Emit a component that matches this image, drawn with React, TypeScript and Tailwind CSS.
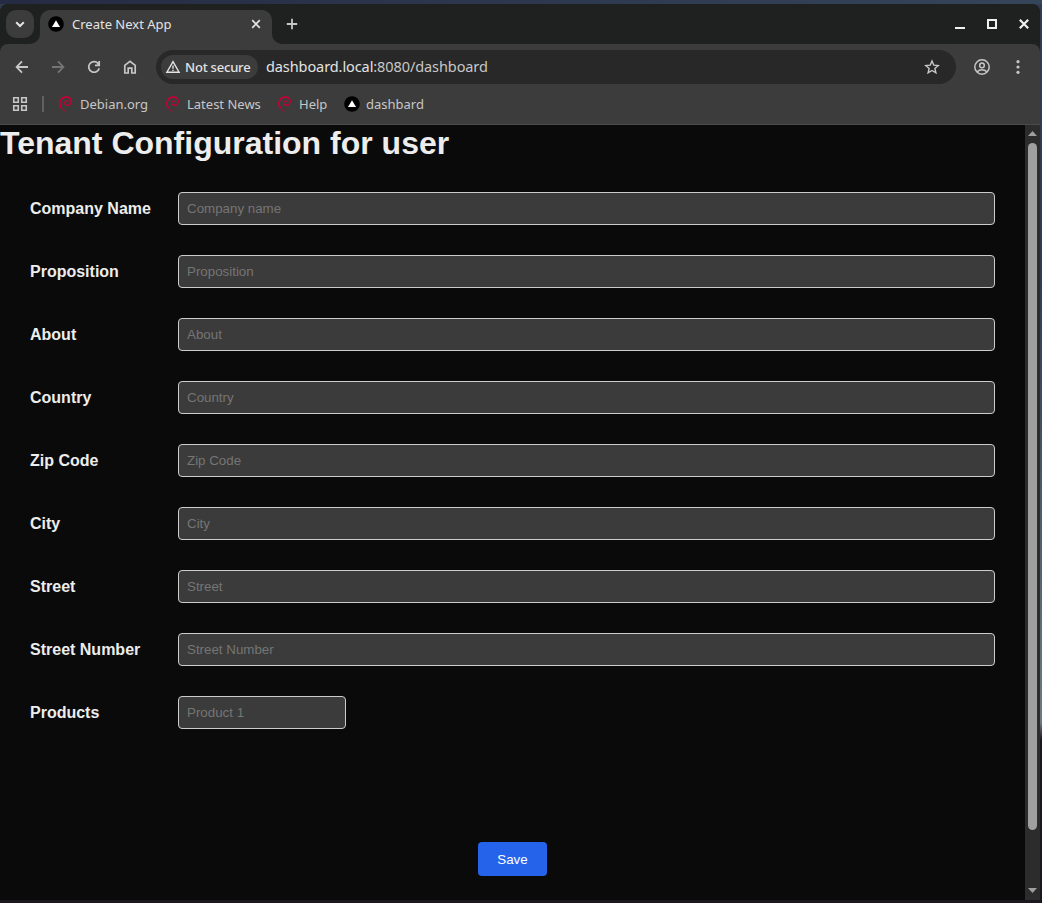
import type { ReactNode } from "react";

function Icon({ children, className = "" }: { children: ReactNode; className?: string }) {
  return (
    <svg
      viewBox="0 0 20 20"
      className={"block size-5 shrink-0 fill-none stroke-current " + className}
    >
      {children}
    </svg>
  );
}

function NextLogo() {
  return (
    <svg viewBox="0 0 16 16" className="block size-4 shrink-0">
      <circle cx="8" cy="8" r="7.8" fill="#000" />
      <path d="M8 4.2 12 11H4Z" fill="#fff" />
    </svg>
  );
}

function DebianSwirl() {
  return (
    <svg viewBox="0 0 16 16" className="block size-4 shrink-0 fill-none stroke-[#c70036]">
      <path
        d="M9.4 8.9C7.9 9.6 6.4 8.6 6.6 6.9 6.8 5 8.8 4.4 10.1 5.2"
        strokeWidth="1.1"
        strokeLinecap="round"
      />
      <path d="M9.2 9.3c2 .1 3.8-1.5 4-3.6C13.4 3 11.3.9 8.4 1" strokeWidth="1.5" />
      <path d="M11.5 1.7C8.6.3 4.7 1 3 3.6 1.3 6.2 1.8 9.6 3.4 12" strokeWidth="1.6" />
      <path d="M2.9 10.8c1 2.1 2.4 3.7 4.6 4.8" strokeWidth="1" />
    </svg>
  );
}

function TabStrip() {
  return (
    <div className="flex h-10 items-start rounded-tr-lg bg-[#1f2120]">
      <button className="mt-1.5 ml-1.5 flex size-7 items-center justify-center rounded-[10px] bg-[#3c3c3c] text-[#e3e3e3]">
        <Icon className="stroke-2">
          <path d="m6.2 8.2 3.8 3.8 3.8-3.8" />
        </Icon>
      </button>
      <svg viewBox="0 0 10 10" className="mt-[30px] -ml-1 block size-2.5 shrink-0">
        <path d="M10 0A10 10 0 0 1 0 10H10Z" fill="#3c3c3c" />
      </svg>
      <div className="mt-1.5 flex h-[34px] w-[232px] items-start rounded-t-[10px] bg-[#3c3c3c] pt-1.5 pl-2 text-[#e3e3e3]">
        <NextLogo />
        <span className="ml-2 w-[174px] text-[13px] leading-4 whitespace-nowrap">Create Next App</span>
        <Icon className="-mt-0.5 stroke-[1.7]">
          <path d="m6.2 6.2 7.6 7.6m0-7.6-7.6 7.6" />
        </Icon>
      </div>
      <svg viewBox="0 0 10 10" className="mt-[30px] block size-2.5 shrink-0">
        <path d="M0 0A10 10 0 0 0 10 10H0Z" fill="#3c3c3c" />
      </svg>
      <Icon className="mt-2.5 stroke-[1.8] text-[#c7c7c7]">
        <path d="M10 4.8v10.4M4.8 10h10.4" />
      </Icon>
      <div className="mt-2.5 mr-1.5 ml-auto flex gap-3 text-[#f0f0f0]">
        <Icon className="stroke-2">
          <path d="M5 14h10" />
        </Icon>
        <Icon className="stroke-2">
          <path d="M6 6h8v8H6z" />
        </Icon>
        <Icon className="stroke-[2.2]">
          <path d="m5.8 5.8 8.4 8.4m0-8.4-8.4 8.4" />
        </Icon>
      </div>
    </div>
  );
}

function Toolbar() {
  return (
    <div className="flex h-[46px] items-center bg-[#3c3c3c] pl-3 text-[#c7c7c7]">
      <div className="flex gap-4">
        <Icon className="stroke-[1.8]">
          <path d="M16 10H5M10 4.4 4.6 10l5.4 5.6" />
        </Icon>
        <Icon className="stroke-[1.8] text-[#757575]">
          <path d="M4 10h11M10 4.4l5.4 5.6-5.4 5.6" />
        </Icon>
        <Icon className="stroke-[1.7]">
          <path d="M15.2 11.2A5.3 5.3 0 1 1 14 6.4L15.2 8M15.2 4v4.3H11" />
        </Icon>
        <Icon className="stroke-[1.7]">
          <path d="M4.8 16V8.3L10 4.3l5.2 4V16h-3.4v-4.8H8.2V16Z" />
        </Icon>
      </div>
      <div className="ml-4 flex h-[34px] w-[800px] items-center rounded-full bg-[#282828] pr-3.5 pl-[5px]">
        <div className="flex h-6 w-[97px] items-center rounded-full bg-[#3c3c3c] pl-0.5 text-[#e3e3e3]">
          <Icon className="stroke-[1.4]">
            <path d="m10 4.7 6.1 10.5H3.9ZM10 8.5v3.3m0 .9v1.4" />
          </Icon>
          <span className="ml-0.5 pt-px text-[13px] font-medium tracking-[-0.2px] whitespace-nowrap">
            Not secure
          </span>
        </div>
        <span className="ml-2 flex-1 text-[14.5px] tracking-[-0.09px] text-[#c7c7c7]">
          <span className="text-[#e3e3e3]">dashboard.local</span>:8080/dashboard
        </span>
        <Icon className="stroke-[1.4]">
          <path d="m10 4 1.75 4.1 4.5.4-3.4 2.95 1.05 4.4L10 13.5l-3.9 2.35 1.05-4.4-3.4-2.95 4.5-.4Z" />
        </Icon>
      </div>
      <Icon className="ml-4 stroke-[1.5]">
        <circle cx="10" cy="10" r="7.2" />
        <circle cx="10" cy="8.4" r="2.3" />
        <path d="M5 15c1.4-1.5 3.1-2.2 5-2.2s3.6.7 5 2.2" />
      </Icon>
      <Icon className="ml-4">
        <g fill="currentColor" stroke="none">
          <circle cx="10" cy="4.7" r="1.6" />
          <circle cx="10" cy="10" r="1.6" />
          <circle cx="10" cy="15.3" r="1.6" />
        </g>
      </Icon>
    </div>
  );
}

function Bookmarks() {
  return (
    <div className="flex h-[35px] items-start border-b border-[#4a4a4a] bg-[#3c3c3c] pt-1.5 pl-3 text-[13px] leading-4 text-[#c7c7c7]">
      <svg viewBox="0 0 16 16" className="mr-3.5 block size-4 fill-none stroke-current stroke-[1.6]">
        <path d="M1.75 1.75h4.5v4.5h-4.5zM9.75 1.75h4.5v4.5h-4.5zM1.75 9.75h4.5v4.5h-4.5zM9.75 9.75h4.5v4.5h-4.5z" />
      </svg>
      <div className="mr-[14px] h-4 w-0.5 bg-[#606060]" />
      <div className="flex w-[107px] gap-1.5">
        <DebianSwirl />
        <span className="whitespace-nowrap">Debian.org</span>
      </div>
      <div className="flex w-[112px] gap-1.5">
        <DebianSwirl />
        <span className="whitespace-nowrap">Latest News</span>
      </div>
      <div className="flex w-[67px] gap-1.5">
        <DebianSwirl />
        <span className="whitespace-nowrap">Help</span>
      </div>
      <div className="flex gap-1.5">
        <NextLogo />
        <span className="whitespace-nowrap">dashbard</span>
      </div>
    </div>
  );
}

const fields = [
  ["Company Name", "Company name"],
  ["Proposition", "Proposition"],
  ["About", "About"],
  ["Country", "Country"],
  ["Zip Code", "Zip Code"],
  ["City", "City"],
  ["Street", "Street"],
  ["Street Number", "Street Number"],
  ["Products", "Product 1"],
];

function TenantForm() {
  return (
    <main className="flex-1 bg-[#0a0a0a] font-['Liberation_Sans',Arial,sans-serif] text-[#ededed]">
      <h1 className="h-[37px] text-[32px] leading-[37px] font-bold">Tenant Configuration for user</h1>
      <form className="flex flex-col gap-[30px] px-[30px] pt-[30px]">
        {fields.map(([label, placeholder]) => (
          <label key={label} className="flex h-[33px] items-center">
            <span className="w-[148px] text-base font-bold">{label}</span>
            <input
              placeholder={placeholder}
              className={
                "h-[33px] rounded border border-[#cccccc] bg-[#3b3b3b] px-2 text-[13.333px] placeholder:text-[#757575] " +
                (label === "Products" ? "w-[168px]" : "flex-1")
              }
            />
          </label>
        ))}
        <button
          type="button"
          className="mt-[83px] ml-[448px] h-[34px] w-[69px] rounded bg-[#2563eb] pt-0.5 text-[13.333px] text-white"
        >
          Save
        </button>
      </form>
    </main>
  );
}

function Scrollbar() {
  return (
    <div className="flex w-[15px] flex-col items-center bg-[#2c2c2c]">
      <svg viewBox="0 0 9 5" className="mt-1.5 block h-[5px] w-[9px]">
        <path d="M4.5 0 9 5H0Z" fill="#9f9f9f" />
      </svg>
      <div className="mt-[7px] h-[687px] w-[9px] rounded-full bg-[#9f9f9f]" />
      <svg viewBox="0 0 9 5" className="mt-[58px] block h-[5px] w-[9px]">
        <path d="M0 0h9L4.5 5Z" fill="#9f9f9f" />
      </svg>
    </div>
  );
}

export default function App() {
  return (
    <div className="h-[903px] w-[1042px] overflow-hidden bg-linear-to-b from-[#303b50] from-30% via-[#6d7b80] via-80% to-[#1c171e] to-82% font-['Noto_Sans',sans-serif]">
      <div className="h-1 bg-linear-to-r from-[#252b42] to-[#35455a]" />
      <div className="flex h-[896px] w-[1040px] flex-col overflow-hidden rounded-t-lg bg-[#1f2120]">
        <TabStrip />
        <div className="overflow-hidden rounded-t-lg">
          <Toolbar />
          <Bookmarks />
        </div>
        <div className="flex flex-1">
          <TenantForm />
          <Scrollbar />
        </div>
      </div>
      <div className="h-[3px] bg-[#1c171e]" />
    </div>
  );
}
